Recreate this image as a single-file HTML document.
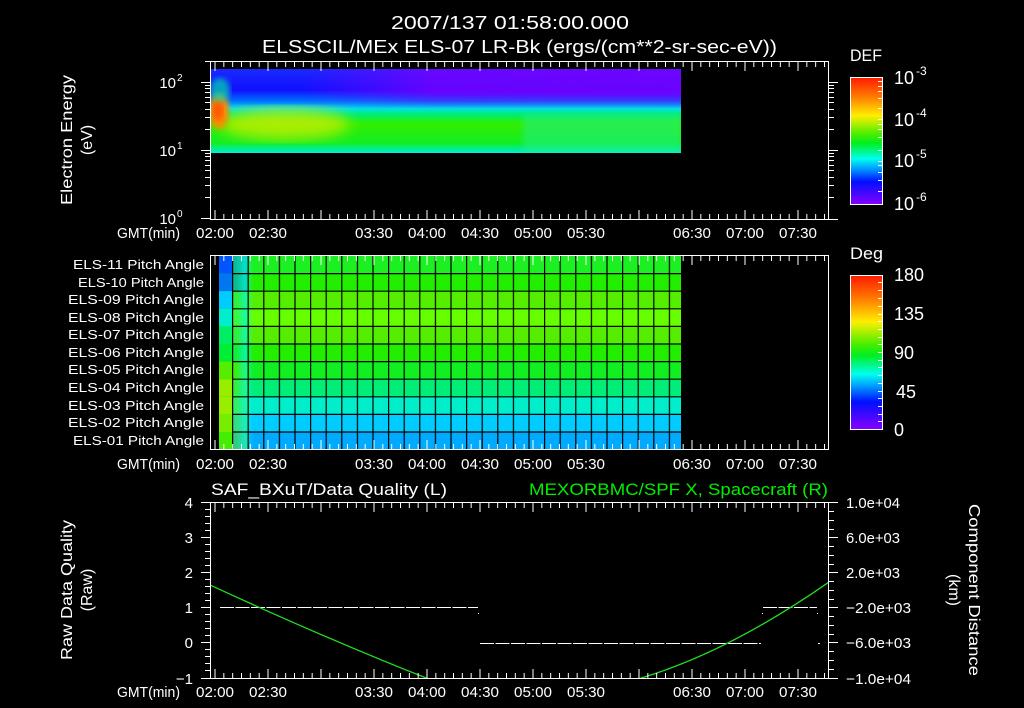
<!DOCTYPE html>
<html><head><meta charset="utf-8"><style>
html,body{margin:0;padding:0;background:#000;width:1024px;height:708px;overflow:hidden}
svg{display:block}
text{font-family:"Liberation Sans",sans-serif;fill:#fff}
</style></head><body>
<svg width="1024" height="708" viewBox="0 0 1024 708" xmlns="http://www.w3.org/2000/svg">
<defs>
<pattern id="tk" patternUnits="userSpaceOnUse" x="214.5" y="0" width="8.8333" height="708"><rect x="0" y="0" width="1" height="708" fill="#fff"/></pattern>
<pattern id="tkM" patternUnits="userSpaceOnUse" x="214.5" y="0" width="53" height="708"><rect x="0" y="0" width="1" height="708" fill="#fff"/></pattern>
<pattern id="gv" patternUnits="userSpaceOnUse" x="232" y="0" width="15.6" height="708"><rect x="0" y="0" width="1.2" height="708" fill="#000"/></pattern>
<linearGradient id="cb" x1="0" y1="0" x2="0" y2="1">
<stop offset="0" stop-color="#ff1a00"/><stop offset="0.15" stop-color="#ff7a00"/><stop offset="0.3" stop-color="#ffee00"/><stop offset="0.45" stop-color="#44ee00"/><stop offset="0.52" stop-color="#00ee22"/><stop offset="0.64" stop-color="#00ffee"/><stop offset="0.72" stop-color="#0099ff"/><stop offset="0.82" stop-color="#0010ff"/><stop offset="1" stop-color="#8800ff"/></linearGradient>
<linearGradient id="sp" x1="0" y1="0" x2="0" y2="1">
<stop offset="0" stop-color="#1a2aff"/><stop offset="0.25" stop-color="#1010ff"/><stop offset="0.38" stop-color="#0070ff"/><stop offset="0.47" stop-color="#00e0e8"/><stop offset="0.55" stop-color="#00ee66"/><stop offset="0.65" stop-color="#33ee00"/><stop offset="0.88" stop-color="#11ee22"/><stop offset="0.96" stop-color="#00ee99"/><stop offset="1" stop-color="#00eedd"/></linearGradient>
<linearGradient id="pu" x1="0" y1="0" x2="1" y2="0"><stop offset="0" stop-color="#7a00ff" stop-opacity="0"/><stop offset="0.35" stop-color="#7a00ff" stop-opacity="0.8"/><stop offset="1" stop-color="#7a00ff" stop-opacity="0.85"/></linearGradient>
<linearGradient id="pv" x1="0" y1="0" x2="0" y2="1"><stop offset="0" stop-color="#fff"/><stop offset="0.6" stop-color="#fff"/><stop offset="1" stop-color="#000"/></linearGradient>
<mask id="pm"><rect x="211" y="69" width="470" height="40" fill="url(#pv)"/></mask>
<linearGradient id="cy" x1="0" y1="0" x2="1" y2="0"><stop offset="0" stop-color="#00ffee" stop-opacity="0"/><stop offset="0.5" stop-color="#00ffee" stop-opacity="0.55"/><stop offset="1" stop-color="#00ffee" stop-opacity="0"/></linearGradient>
<filter id="bl"><feGaussianBlur stdDeviation="7"/></filter>
<filter id="bl2"><feGaussianBlur stdDeviation="3"/></filter>
<clipPath id="spc"><rect x="211" y="69" width="470" height="84"/></clipPath>
<clipPath id="bc"><rect x="211" y="503" width="617" height="175"/></clipPath>
</defs>

<text x="510" y="29" font-size="18" text-anchor="middle" textLength="238" lengthAdjust="spacingAndGlyphs">2007/137 01:58:00.000</text>
<text x="262" y="53" font-size="18" textLength="515" lengthAdjust="spacingAndGlyphs">ELSSCIL/MEx ELS-07 LR-Bk  (ergs/(cm**2-sr-sec-eV))</text>

<g clip-path="url(#spc)">
<rect x="211" y="69" width="470" height="84" fill="url(#sp)"/>
<rect x="300" y="69" width="381" height="40" fill="url(#pu)" mask="url(#pm)"/>
<rect x="523" y="114" width="158" height="39" fill="#22ee88" opacity="0.55" filter="url(#bl2)"/>
<ellipse cx="285" cy="124" rx="65" ry="16" fill="#ddee00" opacity="0.7" filter="url(#bl)"/>
<ellipse cx="219" cy="111" rx="10" ry="18" fill="#ff8800" filter="url(#bl2)"/>
<ellipse cx="218" cy="110" rx="5" ry="10" fill="#ff5500" filter="url(#bl2)"/>
<ellipse cx="220" cy="90" rx="10" ry="12" fill="#00ddaa" opacity="0.7" filter="url(#bl2)"/>
</g>
<rect x="210.5" y="61.5" width="618" height="158" fill="none" stroke="#fff"/>
<rect x="211" y="62" width="617" height="5" fill="url(#tk)"/>
<rect x="211" y="62" width="617" height="9" fill="url(#tkM)"/>
<rect x="211" y="214" width="617" height="5" fill="url(#tk)"/>
<rect x="211" y="210" width="617" height="9" fill="url(#tkM)"/>
<g stroke="#fff" stroke-width="1">
<path d="M201 82.5h9M201 150.5h9M201 218.5h9M205 129.5h5M205 117.5h5M205 109.5h5M205 102.5h5M205 97.5h5M205 92.5h5M205 88.5h5M205 85.5h5M205 197.5h5M205 185.5h5M205 177.5h5M205 170.5h5M205 165.5h5M205 160.5h5M205 156.5h5M205 153.5h5M205 61.5h5"/>
<path d="M829 82.5h9M829 150.5h9M829 129.5h5M829 117.5h5M829 109.5h5M829 102.5h5M829 97.5h5M829 92.5h5M829 88.5h5M829 85.5h5M829 197.5h5M829 185.5h5M829 177.5h5M829 170.5h5M829 165.5h5M829 160.5h5M829 156.5h5M829 153.5h5M829 219.5h9"/>
</g>
<text x="176" y="88" font-size="15" text-anchor="end">10</text><text x="177" y="81" font-size="10">2</text>
<text x="176" y="156" font-size="15" text-anchor="end">10</text><text x="177" y="149" font-size="10">1</text>
<text x="176" y="224" font-size="15" text-anchor="end">10</text><text x="177" y="217" font-size="10">0</text>
<text transform="translate(72,140) rotate(-90)" font-size="16" text-anchor="middle" textLength="130" lengthAdjust="spacingAndGlyphs">Electron Energy</text>
<text transform="translate(92,140) rotate(-90)" font-size="16" text-anchor="middle">(eV)</text>

<text x="850" y="61" font-size="17" textLength="32" lengthAdjust="spacingAndGlyphs">DEF</text>
<rect x="850.5" y="77.5" width="32" height="127" fill="url(#cb)" stroke="#fff"/>
<g stroke="#fff"><path d="M878 81.5h4M878 86.5h4M878 91.5h4M878 98.5h4M878 108.5h4M878 119.5h4M878 124.5h4M878 129.5h4M878 137.5h4M878 150.5h4M878 161.5h4M878 165.5h4M878 172.5h4M878 180.5h4M878 191.5h4"/></g>
<g font-size="18">
<text x="894" y="84">10</text><text x="916" y="75" font-size="12">-3</text>
<text x="894" y="126">10</text><text x="916" y="117" font-size="12">-4</text>
<text x="894" y="167">10</text><text x="916" y="158" font-size="12">-5</text>
<text x="894" y="210">10</text><text x="916" y="201" font-size="12">-6</text>
</g>

<g font-size="15">
<g id="tl1">
<text x="180" y="238" text-anchor="end" textLength="63" lengthAdjust="spacingAndGlyphs">GMT(min)</text>
<text x="215" y="238" text-anchor="middle" textLength="38" lengthAdjust="spacingAndGlyphs">02:00</text>
<text x="268" y="238" text-anchor="middle" textLength="38" lengthAdjust="spacingAndGlyphs">02:30</text>
<text x="374" y="238" text-anchor="middle" textLength="38" lengthAdjust="spacingAndGlyphs">03:30</text>
<text x="427" y="238" text-anchor="middle" textLength="38" lengthAdjust="spacingAndGlyphs">04:00</text>
<text x="480" y="238" text-anchor="middle" textLength="38" lengthAdjust="spacingAndGlyphs">04:30</text>
<text x="533" y="238" text-anchor="middle" textLength="38" lengthAdjust="spacingAndGlyphs">05:00</text>
<text x="586" y="238" text-anchor="middle" textLength="38" lengthAdjust="spacingAndGlyphs">05:30</text>
<text x="692" y="238" text-anchor="middle" textLength="38" lengthAdjust="spacingAndGlyphs">06:30</text>
<text x="745" y="238" text-anchor="middle" textLength="38" lengthAdjust="spacingAndGlyphs">07:00</text>
<text x="798" y="238" text-anchor="middle" textLength="38" lengthAdjust="spacingAndGlyphs">07:30</text>
</g>
<use href="#tl1" y="231"/>
<use href="#tl1" y="459"/>
</g>

<g>
<rect x="219" y="256" width="462" height="17.6" fill="#1cf022"/>
<rect x="219" y="273.6" width="462" height="17.6" fill="#22ee00"/>
<rect x="219" y="291.2" width="462" height="17.6" fill="#55ee00"/>
<rect x="219" y="308.8" width="462" height="17.6" fill="#66ff00"/>
<rect x="219" y="326.4" width="462" height="17.6" fill="#55ee00"/>
<rect x="219" y="344" width="462" height="17.6" fill="#22ee00"/>
<rect x="219" y="361.6" width="462" height="17.6" fill="#11ee22"/>
<rect x="219" y="379.2" width="462" height="17.6" fill="#00ee77"/>
<rect x="219" y="396.8" width="462" height="17.6" fill="#00eecc"/>
<rect x="219" y="414.4" width="462" height="17.6" fill="#00ccff"/>
<rect x="219" y="432" width="462" height="17.5" fill="#00aaff"/>
<rect x="219" y="256" width="14" height="17.6" fill="#0055ff"/>
<rect x="219" y="273.6" width="14" height="17.6" fill="#0077ee"/>
<rect x="219" y="291.2" width="14" height="17.6" fill="#00ccff"/>
<rect x="219" y="308.8" width="14" height="17.6" fill="#00eecc"/>
<rect x="219" y="326.4" width="14" height="17.6" fill="#00ee66"/>
<rect x="219" y="344" width="14" height="17.6" fill="#00ee33"/>
<rect x="219" y="361.6" width="14" height="17.6" fill="#55ee00"/>
<rect x="219" y="379.2" width="14" height="17.6" fill="#99ee00"/>
<rect x="219" y="396.8" width="14" height="17.6" fill="#99ee00"/>
<rect x="219" y="414.4" width="14" height="17.6" fill="#77ee00"/>
<rect x="219" y="432" width="14" height="17.5" fill="#44ee00"/>
<rect x="233" y="256" width="16" height="35" fill="#0099ee" opacity="0.6"/>
<rect x="233" y="291" width="16" height="70" fill="#00ee88" opacity="0.4"/>
<rect x="233" y="361" width="16" height="88" fill="#66ee00" opacity="0.5"/>
<rect x="236" y="256" width="18" height="193" fill="url(#cy)"/>
<rect x="232" y="256" width="449" height="193" fill="url(#gv)"/>
<g stroke="#000" stroke-width="1.2">
<path d="M232 273.6H681M232 291.2H681M232 308.8H681M232 326.4H681M232 344H681M232 361.6H681M232 379.2H681M232 396.8H681M232 414.4H681M232 432H681"/>
</g>
</g>
<rect x="210.5" y="255.5" width="618" height="194" fill="none" stroke="#fff"/>
<rect x="211" y="256" width="617" height="5" fill="url(#tk)"/>
<rect x="211" y="256" width="617" height="9" fill="url(#tkM)"/>
<rect x="211" y="444" width="617" height="5" fill="url(#tk)"/>
<rect x="211" y="440" width="617" height="9" fill="url(#tkM)"/>
<g font-size="13" text-anchor="end">
<text x="204" y="269" textLength="131" lengthAdjust="spacingAndGlyphs">ELS-11 Pitch Angle</text>
<text x="204" y="287" textLength="126" lengthAdjust="spacingAndGlyphs">ELS-10 Pitch Angle</text>
<text x="204" y="304" textLength="136" lengthAdjust="spacingAndGlyphs">ELS-09 Pitch Angle</text>
<text x="204" y="322" textLength="136" lengthAdjust="spacingAndGlyphs">ELS-08 Pitch Angle</text>
<text x="204" y="339" textLength="136" lengthAdjust="spacingAndGlyphs">ELS-07 Pitch Angle</text>
<text x="204" y="357" textLength="136" lengthAdjust="spacingAndGlyphs">ELS-06 Pitch Angle</text>
<text x="204" y="374" textLength="136" lengthAdjust="spacingAndGlyphs">ELS-05 Pitch Angle</text>
<text x="204" y="392" textLength="136" lengthAdjust="spacingAndGlyphs">ELS-04 Pitch Angle</text>
<text x="204" y="410" textLength="136" lengthAdjust="spacingAndGlyphs">ELS-03 Pitch Angle</text>
<text x="204" y="427" textLength="136" lengthAdjust="spacingAndGlyphs">ELS-02 Pitch Angle</text>
<text x="204" y="445" textLength="131" lengthAdjust="spacingAndGlyphs">ELS-01 Pitch Angle</text>
</g>

<text x="850" y="259" font-size="17" textLength="33" lengthAdjust="spacingAndGlyphs">Deg</text>
<rect x="850.5" y="275.5" width="32" height="154" fill="url(#cb)" stroke="#fff"/>
<g stroke="#fff"><path d="M878 282.5h4M878 290.5h4M878 298.5h4M878 306.5h4M878 314.5h4M878 321.5h4M878 329.5h4M878 337.5h4M878 344.5h4M878 352.5h4M878 360.5h4M878 367.5h4M878 375.5h4M878 383.5h4M878 391.5h4M878 398.5h4M878 406.5h4M878 414.5h4M878 421.5h4"/></g>
<g font-size="18">
<text x="894" y="281">180</text>
<text x="894" y="320">135</text>
<text x="894" y="359">90</text>
<text x="896" y="398">45</text>
<text x="894" y="436">0</text>
</g>

<text x="211" y="495" font-size="17" textLength="236" lengthAdjust="spacingAndGlyphs">SAF_BXuT/Data Quality (L)</text>
<text x="828" y="495" font-size="17" text-anchor="end" style="fill:#00ee00" textLength="299" lengthAdjust="spacingAndGlyphs">MEXORBMC/SPF X, Spacecraft (R)</text>
<g stroke="#fff" stroke-width="1">
<path d="M220 607.5H478" stroke-dasharray="14 1.5"/>
<path d="M480 643.5H761" stroke-dasharray="14 1.5"/>
<path d="M763 607.5H817" stroke-dasharray="14 1.5"/>
<path d="M478 613.5h1M762 613.5h1M817 613.5h1M818 643.5h2"/>
</g>
<g clip-path="url(#bc)" fill="none" stroke="#22dd22" stroke-width="1.3">
<path d="M210 585 Q340 645 452 688"/>
<path d="M590 690 Q700 672 829 582"/>
</g>
<rect x="210.5" y="502.5" width="618" height="176" fill="none" stroke="#fff"/>
<rect x="211" y="503" width="617" height="5" fill="url(#tk)"/>
<rect x="211" y="503" width="617" height="9" fill="url(#tkM)"/>
<rect x="211" y="673" width="617" height="5" fill="url(#tk)"/>
<rect x="211" y="669" width="617" height="9" fill="url(#tkM)"/>
<g stroke="#fff">
<path d="M201 502.5h9M205 509.5h5M205 516.5h5M205 523.5h5M205 530.5h5M201 537.5h9M205 544.5h5M205 551.5h5M205 558.5h5M205 565.5h5M201 572.5h9M205 579.5h5M205 586.5h5M205 593.5h5M205 600.5h5M201 607.5h9M205 614.5h5M205 621.5h5M205 628.5h5M205 635.5h5M201 642.5h9M205 649.5h5M205 656.5h5M205 663.5h5M205 670.5h5M201 678.5h9"/>
<path d="M829 502.5h9M829 511.5h5M829 520.5h5M829 529.5h5M829 537.5h9M829 546.5h5M829 555.5h5M829 564.5h5M829 572.5h9M829 581.5h5M829 590.5h5M829 599.5h5M829 607.5h9M829 616.5h5M829 625.5h5M829 634.5h5M829 642.5h9M829 651.5h5M829 660.5h5M829 669.5h5M829 678.5h9"/>
</g>
<g font-size="15" text-anchor="end">
<text x="193" y="508">4</text><text x="193" y="543">3</text><text x="193" y="578">2</text>
<text x="193" y="613">1</text><text x="193" y="648">0</text><text x="193" y="684">−1</text>
</g>
<g font-size="15">
<text x="846" y="508" textLength="54" lengthAdjust="spacingAndGlyphs">1.0e+04</text>
<text x="846" y="543" textLength="54" lengthAdjust="spacingAndGlyphs">6.0e+03</text>
<text x="846" y="578" textLength="54" lengthAdjust="spacingAndGlyphs">2.0e+03</text>
<text x="846" y="613" textLength="65" lengthAdjust="spacingAndGlyphs">−2.0e+03</text>
<text x="846" y="648" textLength="65" lengthAdjust="spacingAndGlyphs">−6.0e+03</text>
<text x="846" y="684" textLength="65" lengthAdjust="spacingAndGlyphs">−1.0e+04</text>
</g>
<text transform="translate(72,590) rotate(-90)" font-size="16" text-anchor="middle" textLength="140" lengthAdjust="spacingAndGlyphs">Raw Data Quality</text>
<text transform="translate(92,590) rotate(-90)" font-size="16" text-anchor="middle">(Raw)</text>
<text transform="translate(969,590) rotate(90)" font-size="16" text-anchor="middle" textLength="172" lengthAdjust="spacingAndGlyphs">Component Distance</text>
<text transform="translate(949,590) rotate(90)" font-size="16" text-anchor="middle">(km)</text>
</svg>
</body></html>
